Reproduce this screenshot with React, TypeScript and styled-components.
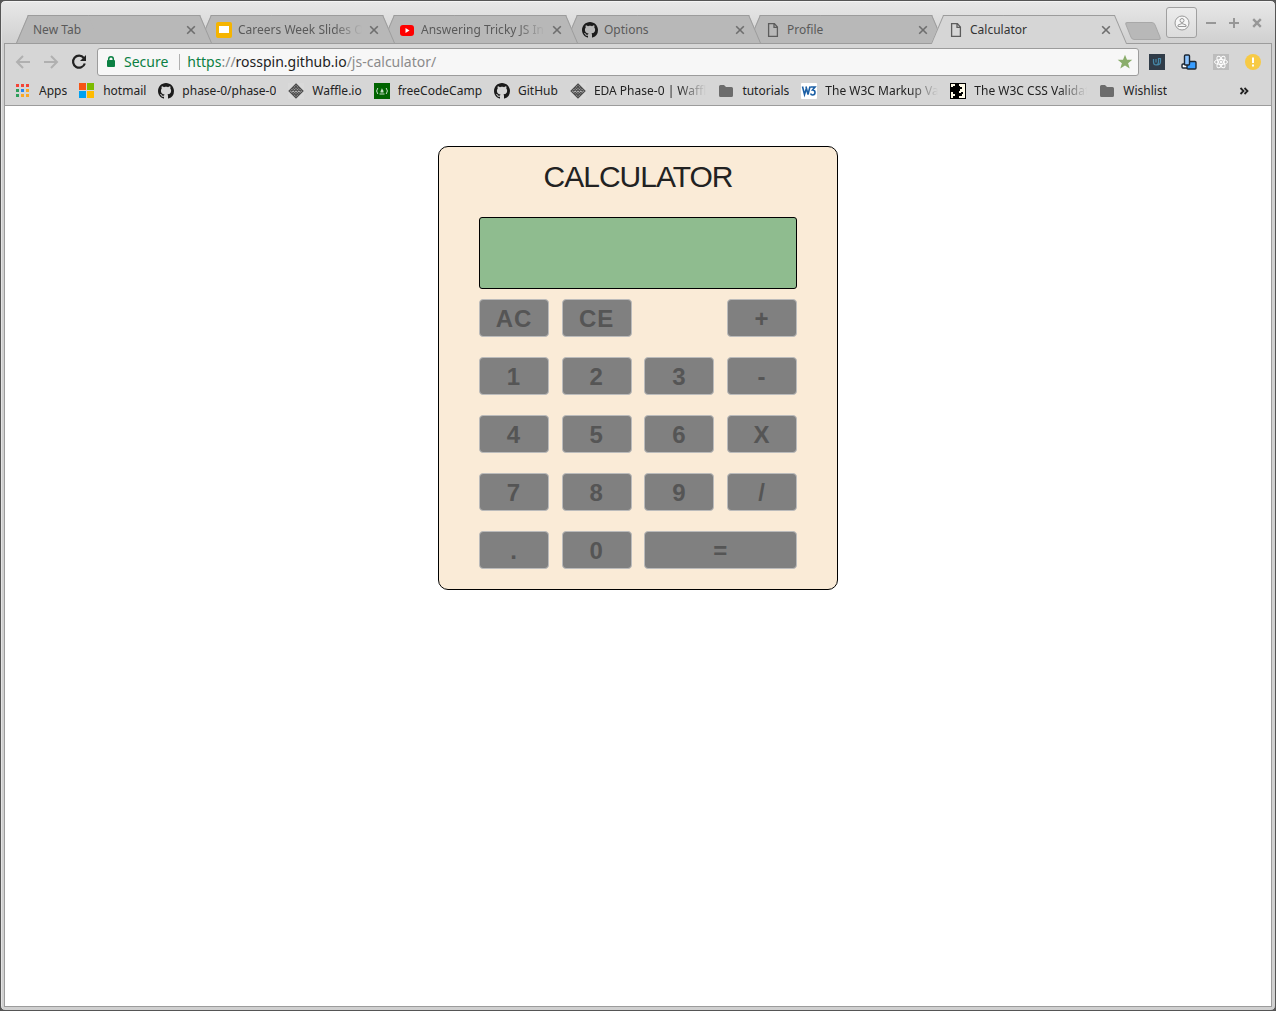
import React from "react";
import styled, { createGlobalStyle, css } from "styled-components";

const uiFont = `"Noto Sans", "Open Sans", sans-serif`;
const chrome = "#d6d6d6";
const line = "#9c9c9c";

const GlobalStyle = createGlobalStyle`
  *, *::before, *::after { box-sizing: border-box; }
  body { margin: 0; background: #555; font-family: ${uiFont}; }
  button { font: inherit; color: inherit; border: 0; padding: 0; background: none; cursor: pointer; }
  svg { display: block; flex: none; }
`;

const Window = styled.div`
  display: flex;
  flex-direction: column;
  min-height: 100vh;
  padding: 0 3px 3px;
  border: 1px solid #555;
  border-radius: 5px;
  background: linear-gradient(#e8e8e8, #d0d0d0 42px, #d0d0d0);
  box-shadow: inset 0 1px 0 #f4f4f4, inset 1px 0 0 #e4e4e4;
`;

const TitleBar = styled.header`
  display: flex;
  align-items: flex-end;
  height: 42px;
  padding: 0 10px 0 12px;
`;

const TabStrip = styled.nav`
  display: flex;
  flex: 0 1 auto;
  min-width: 0;
  isolation: isolate;
`;

const edge = css`
  content: "";
  position: absolute;
  top: 0;
  bottom: 0;
  z-index: -1;
  border-top: 1px solid ${line};
`;

const TabBox = styled.div<{ $active?: boolean; $order: number }>`
  position: relative;
  z-index: ${(p) => p.$order};
  isolation: isolate;
  display: flex;
  align-items: center;
  flex: 0 1 196px;
  width: 196px;
  min-width: 0;
  height: ${(p) => (p.$active ? 29 : 28)}px;
  margin-bottom: ${(p) => (p.$active ? -1 : 0)}px;
  padding: 1px 16px 0 17px;
  color: ${(p) => (p.$active ? "#333" : "#5a5a5a")};

  & + & { margin-left: -13px; }

  &::before {
    ${edge}
    left: 6px;
    right: 40%;
    border-left: 1px solid ${line};
    background: ${(p) => (p.$active ? chrome : "#b8b8b8")};
    transform: skewX(-23deg);
  }
  &::after {
    ${edge}
    left: 40%;
    right: 6px;
    border-right: 1px solid ${line};
    background: ${(p) => (p.$active ? chrome : "#b8b8b8")};
    transform: skewX(23deg);
  }
`;

const TabIcon = styled.span`
  display: flex;
  width: 16px;
  margin-right: 6px;
  flex: none;
`;

const FadeText = styled.span<{ $fade?: boolean }>`
  overflow: hidden;
  white-space: nowrap;
  ${(p) => p.$fade && css`mask-image: linear-gradient(to left, transparent, #000 28px);`}
`;

const TabTitle = styled(FadeText)`
  flex: 1;
  min-width: 0;
  font-size: 12px;
  line-height: 20px;
`;

const CloseButton = styled.button`
  display: flex;
  flex: none;
  margin-left: 7px;
  color: #6e6e6e;
`;

const NewTabButton = styled.button`
  flex: none;
  width: 30px;
  height: 18px;
  margin: 0 0 3px 1px;
  border: 1px solid #a8a8a8;
  border-radius: 3px;
  background: #b8b8b8;
  transform: skewX(22deg);
`;

const WindowButtons = styled.div`
  display: flex;
  align-items: center;
  align-self: flex-start;
  gap: 13px;
  margin: 6px 0 0 auto;
  color: #979797;
`;

const ProfileButton = styled.button`
  display: flex;
  align-items: center;
  justify-content: center;
  width: 31px;
  height: 31px;
  margin-right: -4px;
  border: 1px solid #a0a0a0;
  border-radius: 3px;
  background: linear-gradient(#ececec, #dcdcdc);
`;

const PlainButton = styled.button`
  display: flex;
  flex: none;
`;

const Chrome = styled.div`
  border: 1px solid ${line};
  border-bottom: 0;
  background: ${chrome};
`;

const Toolbar = styled.div`
  display: flex;
  align-items: center;
  gap: 12px;
  height: 36px;
  padding: 0 10px;
`;

const Address = styled.div`
  display: flex;
  align-items: center;
  flex: 1;
  min-width: 0;
  height: 28px;
  margin: 0 -2px;
  padding: 0 5px 0 8px;
  border: 1px solid ${line};
  border-radius: 3px;
  background: #f7f7f7;
  font-size: 14px;
  line-height: 20px;
  color: #8b8b8b;
`;

const Secure = styled.span`
  margin-left: 8px;
  padding-right: 11px;
  color: #0b8043;
`;

const Url = styled.a`
  flex: 1;
  min-width: 0;
  overflow: hidden;
  white-space: nowrap;
  padding-left: 7px;
  color: #8b8b8b;
  text-decoration: none;
`;

const Divider = styled.span`
  width: 1px;
  height: 16px;
  background: #b0b0b0;
`;

const Scheme = styled.span`color: #0b8043;`;
const Host = styled.span`color: #222;`;

const Extensions = styled.div`
  display: flex;
  gap: 16px;
`;

const Bookmarks = styled.nav`
  display: flex;
  align-items: center;
  gap: 12px;
  height: 26px;
  padding: 0 22px 4px 10px;
  border-bottom: 1px solid ${line};
  font-size: 12px;
  line-height: 20px;
  color: #222;
`;

const BookmarkLink = styled.a`
  display: flex;
  align-items: center;
  gap: 8px;
  color: inherit;
  text-decoration: none;
`;

const BookmarkText = styled(FadeText)`
  max-width: 113px;
`;

const Overflow = styled.button`
  display: flex;
  margin-left: auto;
`;

const Page = styled.main`
  flex: 1;
  padding: 40px 16px;
  border: 1px solid ${line};
  border-top: 0;
  background: #fff;
`;

const Calculator = styled.section`
  max-width: 400px;
  margin: 0 auto;
  padding: 10px 40px 20px;
  border: 1px solid #000;
  border-radius: 10px;
  background: #faebd7;
  font-family: "Liberation Sans", Arial, sans-serif;
`;

const Title = styled.h1`
  margin: 0 0 20px;
  font-size: 30px;
  font-weight: 400;
  line-height: 40px;
  letter-spacing: -1px;
  text-align: center;
  color: #222;
`;

const Display = styled.output`
  display: block;
  height: 72px;
  margin-bottom: 10px;
  border: 1px solid #000;
  border-radius: 3px;
  background: #8fbc8f;
`;

const Keys = styled.div`
  display: grid;
  grid-template-columns: repeat(4, 70px);
  justify-content: space-between;
  row-gap: 20px;
`;

const Key = styled.button<{ $column?: string }>`
  height: 38px;
  grid-column: ${(p) => p.$column ?? "auto"};
  padding-top: 2px;
  border: 1px solid #bbb;
  border-radius: 4px;
  background: #808080;
  color: #555;
  font-size: 24px;
  font-weight: 700;
  line-height: 34px;
  letter-spacing: 1px;
`;

const Cross = ({ size = 10, width = 2 }: { size?: number; width?: number }) => (
  <svg width={size} height={size} viewBox="0 0 10 10" stroke="currentColor" strokeWidth={width} fill="none">
    <path d="M1.2 1.2l7.6 7.6M8.8 1.2L1.2 8.8" />
  </svg>
);

const GitHubMark = () => (
  <svg width="16" height="16" viewBox="0 0 16 16" fill="#1b1b1b">
    <path d="M8 0C3.58 0 0 3.58 0 8c0 3.54 2.29 6.53 5.47 7.59.4.07.55-.17.55-.38 0-.19-.01-.82-.01-1.49-2.01.37-2.53-.49-2.69-.94-.09-.23-.48-.94-.82-1.13-.28-.15-.68-.52-.01-.53.63-.01 1.08.58 1.23.82.72 1.21 1.87.87 2.33.66.07-.52.28-.87.51-1.07-1.78-.2-3.64-.89-3.64-3.95 0-.87.31-1.59.82-2.15-.08-.2-.36-1.02.08-2.12 0 0 .67-.21 2.2.82.64-.18 1.32-.27 2-.27s1.36.09 2 .27c1.53-1.04 2.2-.82 2.2-.82.44 1.1.16 1.92.08 2.12.51.56.82 1.27.82 2.15 0 3.07-1.87 3.75-3.65 3.95.29.25.54.73.54 1.48 0 1.07-.01 1.93-.01 2.2 0 .21.15.46.55.38A8.01 8.01 0 0 0 16 8c0-4.42-3.58-8-8-8z" />
  </svg>
);

const SlidesIcon = () => (
  <svg width="16" height="16"><rect width="16" height="16" rx="2" fill="#f5b400" /><rect x="3" y="4" width="10" height="7" fill="#fff" /></svg>
);

const VideoIcon = () => (
  <svg width="16" height="16"><rect x="1" y="3" width="14" height="11" rx="3" fill="#f00" /><path d="M6.5 6v5l4-2.5z" fill="#fff" /></svg>
);

const FileIcon = () => (
  <svg width="16" height="16" fill="none" stroke="#5c5c5c" strokeWidth="1.3"><path d="M3.6 1.6h5.8l3 3.4v9.4H3.6zM9 2v3.4h3.4" /></svg>
);

const AppsIcon = () => {
  const colors = ["#f44336", "#f44336", "#f44336", "#2e9e5b", "#2386f0", "#f9a825", "#2e9e5b", "#f9a825", "#f9a825"];
  return (
    <svg width="16" height="16">
      {colors.map((c, i) => <rect key={i} x={1 + (i % 3) * 5} y={1 + Math.floor(i / 3) * 5} width="3" height="3" fill={c} />)}
    </svg>
  );
};

const WindowsIcon = () => (
  <svg width="16" height="16"><path d="M0 0h7v7H0z" fill="#f65314" /><path d="M8 0h7v7H8z" fill="#7cbb00" /><path d="M0 8h7v7H0z" fill="#00a1f1" /><path d="M8 8h7v7H8z" fill="#ffbb00" /></svg>
);

const WaffleIcon = () => (
  <svg width="16" height="16" stroke="#4c4c4c" strokeWidth="1.1" fill="none">
    <rect width="16" height="16" fill="#d9d9d9" stroke="none" />
    <path d="M8 1l7 7-7 7-7-7z" fill="#b4b4b4" />
    <path d="M6.6 2.400l7 7M5.200 3.800l7 7M3.800 5.200l7 7M2.400 6.600l7 7M9.400 2.400l-7 7M10.800 3.800l-7 7M12.200 5.200l-7 7M13.600 6.600l-7 7" />
  </svg>
);

const CampIcon = () => (
  <svg width="16" height="16" fill="none" stroke="#c4dcc4">
    <rect width="16" height="16" fill="#006400" stroke="none" />
    <path d="M3.800 5q-2.400 3 0 6M12.200 5q2.400 3 0 6M5.500 11h5" />
    <path d="M8 5c0 1.500 2 2 1.500 4.500h-3C6 8 7.500 7 8 5z" fill="#c4dcc4" stroke="none" />
  </svg>
);

const FolderIcon = () => (
  <svg width="16" height="16" fill="#6c6c6c"><path d="M2.500 2H6l2 2h5.500Q15 4 15 5.500v7Q15 14 13.500 14h-11Q1 14 1 12.500v-9Q1 2 2.500 2z" /></svg>
);

const MarkupIcon = () => (
  <svg width="16" height="16" fill="none" stroke="#1b5fa5" strokeWidth="1.6">
    <rect width="16" height="16" rx="1" fill="#fff" stroke="none" />
    <path d="M1.500 3.500L3.500 11.500 5.500 5M5 3.500L7 11.500 9 3.500M9.500 4H14L11.500 7Q14 7 14 9.500T11.500 12Q10 12 9.600 10.500" />
  </svg>
);

const ValidatorIcon = () => (
  <svg width="16" height="16">
    <rect width="16" height="16" fill="#000" />
    <path d="M1 1h4v2H3v1H1zM9 1h6v14H9v-2h3v-2h1V9h-2v1H9V8h1V6h2V4h-2V3H9zM1 9h2v2h2v2H3v2H1z" fill="#fffbe8" />
  </svg>
);

const Arrow = ({ flip }: { flip?: boolean }) => (
  <svg width="16" height="16" fill="none" stroke="#b0b0b0" strokeWidth="2">
    <path d={flip ? "M1 8h13M8 2l6 6-6 6" : "M15 8H2M8 2L2 8l6 6"} />
  </svg>
);

const ReloadIcon = () => (
  <svg width="16" height="16" fill="none" stroke="#222" strokeWidth="2.200">
    <path d="M12.800 4A6 6 0 1 0 13.800 9.500" /><path d="M15 1v6H9z" fill="#222" stroke="none" />
  </svg>
);

const LockIcon = () => (
  <svg width="10" height="14"><path d="M2.700 6V4a2.300 2.300 0 0 1 4.600 0v2" fill="none" stroke="#0b8043" strokeWidth="1.500" /><rect x="1" y="5" width="8" height="7" rx="1" fill="#0b8043" /></svg>
);

const StarIcon = () => (
  <svg width="16" height="16" fill="#8aad6b"><path d="M8 .8l2 5h5.300l-4.200 3.400 1.600 5.400L8 11.400l-4.700 3.200 1.600-5.400L.7 5.800H6z" /></svg>
);

const tabs = [
  { title: "New Tab" },
  { title: "Careers Week Slides O", icon: <SlidesIcon />, fade: true },
  { title: "Answering Tricky JS In", icon: <VideoIcon />, fade: true },
  { title: "Options", icon: <GitHubMark /> },
  { title: "Profile", icon: <FileIcon /> },
  { title: "Calculator", icon: <FileIcon />, active: true },
];

const bookmarks = [
  { title: "Apps", icon: <AppsIcon /> },
  { title: "hotmail", icon: <WindowsIcon /> },
  { title: "phase-0/phase-0", icon: <GitHubMark /> },
  { title: "Waffle.io", icon: <WaffleIcon /> },
  { title: "freeCodeCamp", icon: <CampIcon /> },
  { title: "GitHub", icon: <GitHubMark /> },
  { title: "EDA Phase-0 | Waffl", icon: <WaffleIcon />, fade: true },
  { title: "tutorials", icon: <FolderIcon /> },
  { title: "The W3C Markup Val", icon: <MarkupIcon />, fade: true },
  { title: "The W3C CSS Validat", icon: <ValidatorIcon />, fade: true },
  { title: "Wishlist", icon: <FolderIcon /> },
];

const keys: { label: string; column?: string }[] = [
  { label: "AC" }, { label: "CE" }, { label: "+", column: "4" },
  { label: "1" }, { label: "2" }, { label: "3" }, { label: "-" },
  { label: "4" }, { label: "5" }, { label: "6" }, { label: "X" },
  { label: "7" }, { label: "8" }, { label: "9" }, { label: "/" },
  { label: "." }, { label: "0" }, { label: "=", column: "span 2" },
];

export default function App() {
  return (
    <Window>
      <GlobalStyle />
      <TitleBar>
        <TabStrip aria-label="Tabs">
          {tabs.map((t, i) => (
            <TabBox key={t.title} $active={t.active} $order={t.active ? 10 : 6 - i}>
              {t.icon && <TabIcon>{t.icon}</TabIcon>}
              <TabTitle $fade={t.fade}>{t.title}</TabTitle>
              <CloseButton aria-label={`Close ${t.title}`}><Cross width={1.6} /></CloseButton>
            </TabBox>
          ))}
        </TabStrip>
        <NewTabButton aria-label="Open a new tab" />
        <WindowButtons>
          <ProfileButton aria-label="Profile menu">
            <svg width="16" height="16" fill="none" stroke="#999">
              <circle cx="8" cy="8" r="7" fill="#f6f6f6" /><circle cx="8" cy="5.500" r="2" /><path d="M4 11.500V10q4-3 8 0v1.500z" />
            </svg>
          </ProfileButton>
          <PlainButton aria-label="Minimize"><svg width="10" height="10" stroke="currentColor" strokeWidth="2"><path d="M0 5h10" /></svg></PlainButton>
          <PlainButton aria-label="Maximize"><svg width="10" height="10" stroke="currentColor" strokeWidth="2"><path d="M0 5h10M5 0v10" /></svg></PlainButton>
          <PlainButton aria-label="Close window"><Cross width={2.4} /></PlainButton>
        </WindowButtons>
      </TitleBar>
      <Chrome>
        <Toolbar>
          <PlainButton aria-label="Back"><Arrow /></PlainButton>
          <PlainButton aria-label="Forward"><Arrow flip /></PlainButton>
          <PlainButton aria-label="Reload"><ReloadIcon /></PlainButton>
          <Address>
            <LockIcon />
            <Secure>Secure</Secure>
            <Divider />
            <Url href="#"><Scheme>https</Scheme>://<Host>rosspin.github.io</Host>/js-calculator/</Url>
            <PlainButton aria-label="Bookmark this page"><StarIcon /></PlainButton>
          </Address>
          <Extensions>
            <PlainButton aria-label="Shortcuts extension">
              <svg width="16" height="16" fill="none" stroke="#4688a8" strokeWidth="1.200"><rect width="16" height="16" fill="#303c48" stroke="none" /><path d="M4.500 5v3q0 3 2.500 3t2.500-3V4.500H11.500v3q0 3.500-3.500 3.500M7 5v3.500" /></svg>
            </PlainButton>
            <PlainButton aria-label="Device extension">
              <svg width="16" height="16" stroke="#1c2733" strokeWidth="1.400"><rect x="1" y="10" width="8" height="4" rx="1" fill="#fff" /><rect x="6" y="7.500" width="9" height="7.500" rx="1" fill="#379dff" /><rect x="3.500" y="1" width="5" height="10" rx="1" fill="#8cc4ff" /></svg>
            </PlainButton>
            <PlainButton aria-label="React extension">
              <svg width="16" height="16" fill="none" stroke="#fff"><rect width="16" height="16" fill="#bcbcbc" stroke="none" /><ellipse cx="8" cy="8" rx="6.500" ry="2.500" /><ellipse cx="8" cy="8" rx="6.500" ry="2.500" transform="rotate(60 8 8)" /><ellipse cx="8" cy="8" rx="6.500" ry="2.500" transform="rotate(120 8 8)" /><circle cx="8" cy="8" r="1" fill="#fff" /></svg>
            </PlainButton>
            <PlainButton aria-label="Update available">
              <svg width="16" height="16"><circle cx="8" cy="8" r="8" fill="#f7ca45" /><path d="M7 3.500h2V9H7zM7 10.500h2v2H7z" fill="#fff" /></svg>
            </PlainButton>
          </Extensions>
        </Toolbar>
        <Bookmarks aria-label="Bookmarks">
          {bookmarks.map((b) => (
            <BookmarkLink key={b.title} href="#">
              {b.icon}
              <BookmarkText $fade={b.fade}>{b.title}</BookmarkText>
            </BookmarkLink>
          ))}
          <Overflow aria-label="More bookmarks">
            <svg width="10" height="10" fill="none" stroke="#222" strokeWidth="1.800"><path d="M1.500 2l3 3-3 3M5.500 2l3 3-3 3" /></svg>
          </Overflow>
        </Bookmarks>
      </Chrome>
      <Page>
        <Calculator>
          <Title>CALCULATOR</Title>
          <Display aria-label="Result" />
          <Keys>
            {keys.map((k) => <Key key={k.label} $column={k.column}>{k.label}</Key>)}
          </Keys>
        </Calculator>
      </Page>
    </Window>
  );
}
